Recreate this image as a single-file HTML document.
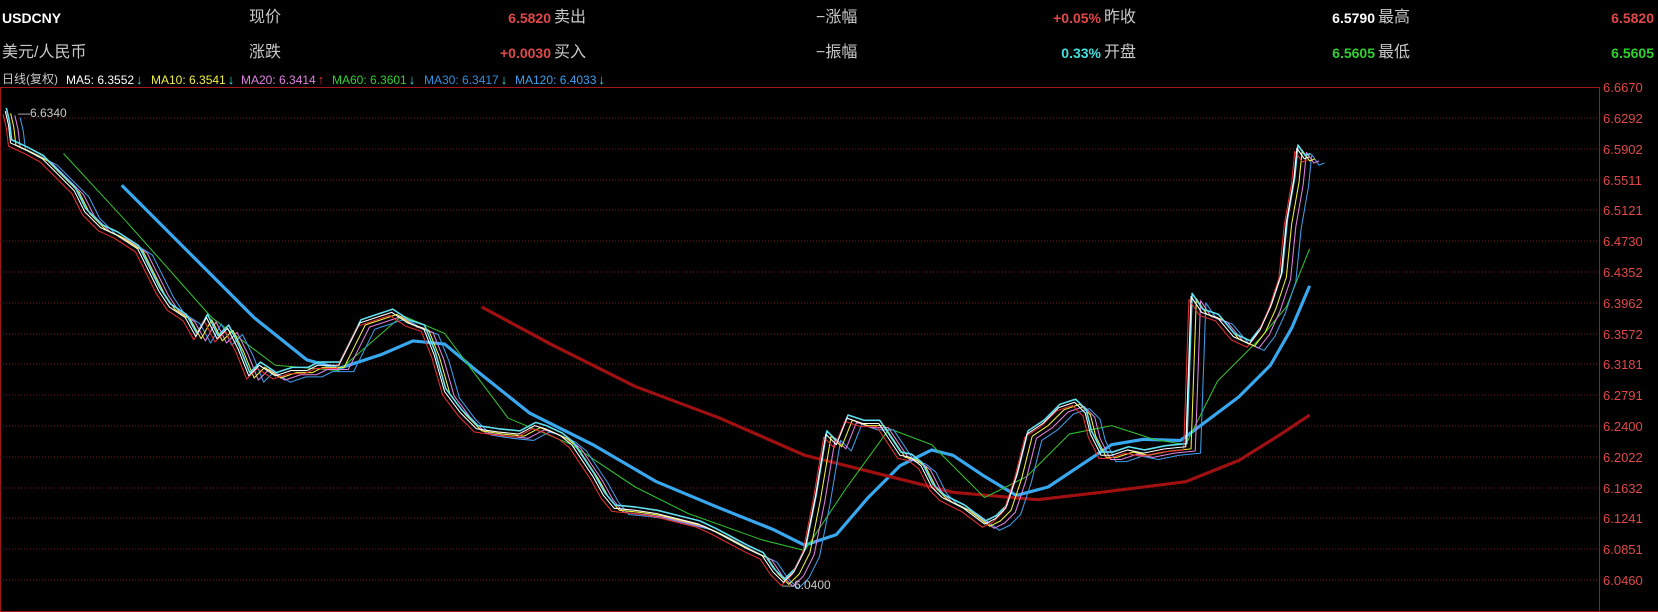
<!DOCTYPE html>
<html><head><meta charset="utf-8"><style>
html,body{margin:0;padding:0;background:#000;width:1658px;height:612px;overflow:hidden;position:relative;font-family:"Liberation Sans","Noto Sans CJK SC",sans-serif}
.t{position:absolute;white-space:nowrap;line-height:1}
.lb{color:#c8c8c8;font-size:16px}
.v{font-weight:bold;font-size:14px}
.ma{font-size:12px;top:73px}
.ma b{font-size:13px;margin-left:2px}
.ax{position:absolute;left:1603px;color:#e04848;font-size:13px;line-height:1}
</style></head><body>
<div class="t v" style="left:2px;top:11px;color:#fff;font-size:14px">USDCNY</div>
<div class="t lb" style="left:2px;top:45px">美元/人民币</div>
<div class="t lb" style="left:249px;top:10px">现价</div>
<div class="t lb" style="left:249px;top:45px">涨跌</div>
<div class="t v" style="right:1107px;top:11px;color:#e04848">6.5820</div>
<div class="t v" style="right:1107px;top:46px;color:#e04848">+0.0030</div>
<div class="t lb" style="left:554px;top:10px">卖出</div>
<div class="t lb" style="left:554px;top:45px">买入</div>
<div class="t lb" style="left:816px;top:10px">−涨幅</div>
<div class="t lb" style="left:816px;top:45px">−振幅</div>
<div class="t v" style="right:557px;top:11px;color:#e04848">+0.05%</div>
<div class="t v" style="right:557px;top:46px;color:#40e0e0">0.33%</div>
<div class="t lb" style="left:1104px;top:10px">昨收</div>
<div class="t lb" style="left:1104px;top:45px">开盘</div>
<div class="t v" style="right:283px;top:11px;color:#fff">6.5790</div>
<div class="t v" style="right:283px;top:46px;color:#30d030">6.5605</div>
<div class="t lb" style="left:1378px;top:10px">最高</div>
<div class="t lb" style="left:1378px;top:45px">最低</div>
<div class="t v" style="right:4px;top:11px;color:#e04848">6.5820</div>
<div class="t v" style="right:4px;top:46px;color:#30d030">6.5605</div>
<div class="t ma" style="left:2px;color:#c8c8c8">日线(复权)</div>
<div class="t ma" style="left:66px;color:#fff">MA5: 6.3552<b style="color:#40e0e0">↓</b></div>
<div class="t ma" style="left:151px;color:#f0f040">MA10: 6.3541<b style="color:#40e0e0">↓</b></div>
<div class="t ma" style="left:241px;color:#e080e0">MA20: 6.3414<b style="color:#f03030">↑</b></div>
<div class="t ma" style="left:332px;color:#30d030">MA60: 6.3601<b style="color:#40e0e0">↓</b></div>
<div class="t ma" style="left:424px;color:#3090e0">MA30: 6.3417<b style="color:#40e0e0">↓</b></div>
<div class="t ma" style="left:515px;color:#3aa0f0">MA120: 6.4033<b style="color:#40e0e0">↓</b></div>
<svg style="position:absolute;left:0;top:0" width="1658" height="612">
<g fill="none" stroke="#a01818" stroke-width="1">
<line x1="0" y1="87.5" x2="1599" y2="87.5"/>
<line x1="1599.5" y1="87" x2="1599.5" y2="612"/>
<line x1="0.5" y1="87" x2="0.5" y2="612"/>
<line x1="0" y1="611.5" x2="1658" y2="611.5"/>
</g>
<g stroke="#7a1818" stroke-width="1" stroke-dasharray="1,2">
<line x1="0" x2="1599" y1="118" y2="118"/><line x1="0" x2="1599" y1="149" y2="149"/><line x1="0" x2="1599" y1="180" y2="180"/><line x1="0" x2="1599" y1="210" y2="210"/><line x1="0" x2="1599" y1="241" y2="241"/><line x1="0" x2="1599" y1="272" y2="272"/><line x1="0" x2="1599" y1="303" y2="303"/><line x1="0" x2="1599" y1="334" y2="334"/><line x1="0" x2="1599" y1="364" y2="364"/><line x1="0" x2="1599" y1="395" y2="395"/><line x1="0" x2="1599" y1="426" y2="426"/><line x1="0" x2="1599" y1="457" y2="457"/><line x1="0" x2="1599" y1="488" y2="488"/><line x1="0" x2="1599" y1="518" y2="518"/><line x1="0" x2="1599" y1="549" y2="549"/><line x1="0" x2="1599" y1="580" y2="580"/>
</g>
<g transform="scale(1.0587)" fill="none" stroke-linejoin="round">
<defs>
<polyline id="p" points="5,105 8,118 10,135 25,142 40,150 55,165 70,180 80,200 95,215 110,222 130,235 140,255 150,275 160,290 175,300 185,318 195,300 205,320 215,310 225,330 235,355 245,345 260,355 275,350 290,350 300,345 320,345 330,325 340,305 355,300 370,295 385,305 400,310 410,335 420,370 435,390 450,405 470,408 490,410 505,402 515,405 530,412 540,420 550,435 560,450 570,468 580,480 600,482 620,485 640,490 660,495 675,502 690,510 705,518 720,525 730,540 740,550 750,540 760,520 770,470 780,410 790,420 800,395 815,400 830,400 840,415 850,430 860,432 870,440 880,460 890,470 910,480 930,495 940,490 950,480 960,450 970,410 985,400 1000,385 1015,380 1025,390 1030,410 1040,430 1050,430 1065,425 1080,428 1100,424 1120,422 1125,280 1135,295 1150,300 1165,318 1180,325 1190,312 1200,290 1210,260 1215,210 1222,170 1225,140 1232,150 1237,148"/>
</defs>
<polyline stroke="#38a8f0" stroke-width="3" points="115,175 180,240 240,300 290,340 320,348 360,335 390,322 420,325 450,350 500,390 560,420 620,455 680,480 730,500 760,515 790,505 820,470 850,440 880,425 900,430 930,450 960,468 990,460 1020,440 1050,420 1080,415 1115,416 1130,405 1170,375 1200,345 1220,310 1237,270"/>
<polyline stroke="#a01010" stroke-width="3" points="455,290 520,325 600,365 680,395 760,430 840,450 900,465 980,472 1040,465 1120,455 1170,435 1210,410 1237,392"/>
<polyline stroke="#30c030" stroke-width="1" points="60,145 120,210 200,300 260,345 320,350 380,298 420,315 480,395 540,420 600,460 650,485 720,510 760,520 800,460 840,405 880,420 930,470 970,450 1010,410 1050,402 1090,415 1120,420 1150,360 1190,320 1215,290 1237,235"/>
<use href="#p" stroke="#3c9ce8" stroke-width="1" transform="translate(14,6)"/>
<use href="#p" stroke="#e080e0" stroke-width="1" transform="translate(9,4)"/>
<use href="#p" stroke="#f0f040" stroke-width="1" transform="translate(5,2)"/>
<use href="#p" stroke="#60e0f0" stroke-width="1.5" transform="translate(1,-3)"/>
<use href="#p" stroke="#e03030" stroke-width="1" transform="translate(-2,3)"/>
<use href="#p" stroke="#fff" stroke-width="1"/>
</g>
<text x="18" y="117" fill="#c8c8c8" font-size="12" font-family="Liberation Sans">—6.6340</text>
<text x="782" y="589" fill="#c8c8c8" font-size="12" font-family="Liberation Sans">—6.0400</text>
</svg>
<div class="ax" style="top:81px">6.6670</div><div class="ax" style="top:112px">6.6292</div><div class="ax" style="top:143px">6.5902</div><div class="ax" style="top:174px">6.5511</div><div class="ax" style="top:204px">6.5121</div><div class="ax" style="top:235px">6.4730</div><div class="ax" style="top:266px">6.4352</div><div class="ax" style="top:297px">6.3962</div><div class="ax" style="top:328px">6.3572</div><div class="ax" style="top:358px">6.3181</div><div class="ax" style="top:389px">6.2791</div><div class="ax" style="top:420px">6.2400</div><div class="ax" style="top:451px">6.2022</div><div class="ax" style="top:482px">6.1632</div><div class="ax" style="top:512px">6.1241</div><div class="ax" style="top:543px">6.0851</div><div class="ax" style="top:574px">6.0460</div>
</body></html>
